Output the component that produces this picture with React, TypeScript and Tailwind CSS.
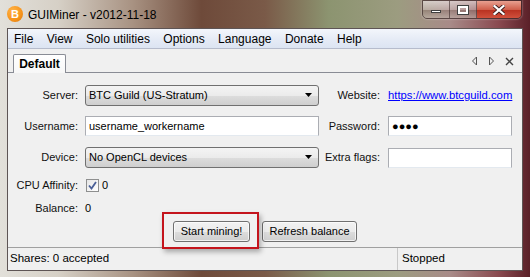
import React from "react";

const menuItems = ["File", "View", "Solo utilities", "Options", "Language", "Donate", "Help"];

function BtcIcon() {
  return (
    <div className="w-[16px] h-[16px] rounded-full bg-[radial-gradient(circle_at_35%_30%,#ffb347,#f7931a_60%,#d8760c)] flex items-center justify-center text-white text-[11px] font-bold leading-none">
      B
    </div>
  );
}

function TitleButtons() {
  return (
    <div className="flex h-[19px] ml-auto mr-[8px] border border-[#3b2a2a]/70 rounded-b-[5px] overflow-hidden shadow-[0_0_2px_rgba(255,255,255,0.6)]">
      <div className="w-[27px] h-full flex items-end justify-center pb-[5px] bg-[linear-gradient(180deg,rgba(255,255,255,0.55),rgba(255,255,255,0.25)_50%,rgba(120,100,90,0.35)_51%,rgba(200,190,180,0.5))] border-r border-[#3b2a2a]/60">
        <div className="w-[10px] h-[3px] bg-white border border-[#404040]" />
      </div>
      <div className="w-[27px] h-full flex items-center justify-center bg-[linear-gradient(180deg,rgba(255,255,255,0.55),rgba(255,255,255,0.25)_50%,rgba(120,100,90,0.35)_51%,rgba(200,190,180,0.5))] border-r border-[#3b2a2a]/60">
        <div className="w-[10px] h-[8px] border-[2px] border-white outline outline-1 outline-[#404040] bg-transparent" />
      </div>
      <div className="w-[44px] h-full flex items-center justify-center bg-[linear-gradient(180deg,#e8a090,#d0604c_50%,#b83020_51%,#d0503c)]">
        <svg width="12" height="10" viewBox="0 0 12 10">
          <path d="M1.5 1 L10.5 9 M10.5 1 L1.5 9" stroke="#3a1a1a" strokeWidth="4" strokeLinecap="square" />
          <path d="M1.5 1 L10.5 9 M10.5 1 L1.5 9" stroke="#ffffff" strokeWidth="2.2" strokeLinecap="square" />
        </svg>
      </div>
    </div>
  );
}

function Combo({ value }: { value: string }) {
  return (
    <div className="w-[234px] h-[21px] rounded-[3px] border border-[#707070] bg-[linear-gradient(180deg,#f4f4f4,#ebebeb_50%,#dddddd_51%,#cfcfcf)] flex items-center pl-[3px] pr-[5px]">
      <span className="flex-1 text-[11px]">{value}</span>
      <svg width="8" height="5" viewBox="0 0 8 5">
        <path d="M0 0 H7 L3.5 4 Z" fill="#000" />
      </svg>
    </div>
  );
}

function TextBox({ value, w }: { value?: string; w: string }) {
  return (
    <div className={`${w} h-[20px] bg-white border border-[#abadb3] border-b-[#e3e9ef] flex items-center px-[3px] text-[11px]`}>
      {value}
    </div>
  );
}

function Label({ children, w = "w-[70px]" }: { children: React.ReactNode; w?: string }) {
  return <div className={`${w} shrink-0 text-right text-[11px] text-[#111]`}>{children}</div>;
}

function Button({ children, w }: { children: React.ReactNode; w: string }) {
  return (
    <div className={`${w} h-[21px] rounded-[3px] border border-[#707070] bg-[linear-gradient(180deg,#f2f2f2,#ebebeb_50%,#dddddd_51%,#cfcfcf)] shadow-[inset_0_0_0_1px_rgba(255,255,255,0.7)] flex items-center justify-center text-[11px]`}>
      {children}
    </div>
  );
}

export default function App() {
  return (
    <div className="w-[530px] h-[277px] flex flex-col overflow-hidden font-['Liberation_Sans',Arial,sans-serif] text-black bg-[linear-gradient(90deg,#e2e0da_0%,#d6d0c6_11%,#a89282_25%,#6e4a3a_38%,#7a5a48_50%,#8c9470_62%,#9c9c80_75%,#a88a88_85%,#8a4a50_94%,#5a2028_100%)]">
      {/* title bar */}
      <div className="h-[28px] shrink-0 flex items-start">
        <div className="ml-[7px] mt-[6px]">
          <BtcIcon />
        </div>
        <div className="ml-[5px] mt-[6px] text-[12px] text-black">GUIMiner - v2012-11-18</div>
        <TitleButtons />
      </div>

      {/* client area */}
      <div className="mx-[7px] h-[243px] shrink-0 border border-[#3a2e2e]/80 bg-[#f0f0f0] flex flex-col">
        <div className="h-[20px] shrink-0 border-b border-[#b6bccc] bg-[linear-gradient(180deg,#f3f6fb,#e4eaf5_60%,#dce4f2)] flex items-center pl-[6px] gap-[13.4px] text-[12px]">
          {menuItems.map((m) => (
            <span key={m}>{m}</span>
          ))}
        </div>

        <div className="h-[24px] shrink-0 border-b border-[#898c95] flex items-end pl-[5px]">
          <div className="w-[53px] h-[19px] -mb-px border border-[#898c95] border-b-0 rounded-t-[2px] bg-[linear-gradient(180deg,#ffffff,#f7f7f7)] flex items-center justify-center text-[12px] font-bold">
            Default
          </div>
          <div className="ml-auto mr-[8px] mb-[6px] flex items-center gap-[10px]">
            <svg width="7" height="10" viewBox="0 0 7 10">
              <path d="M5.5 1 L1.5 5 L5.5 9 Z" fill="none" stroke="#555" strokeWidth="1" />
            </svg>
            <svg width="7" height="10" viewBox="0 0 7 10">
              <path d="M1.5 1 L5.5 5 L1.5 9 Z" fill="none" stroke="#555" strokeWidth="1" />
            </svg>
            <svg width="9" height="9" viewBox="0 0 9 9">
              <path d="M1 1 L8 8 M8 1 L1 8" stroke="#444" strokeWidth="1.4" />
            </svg>
          </div>
        </div>

        {/* panel */}
        <div className="h-[174px] shrink-0 flex flex-col pt-[12px]">
          <div className="h-[21px] flex items-center">
            <Label>Server:</Label>
            <div className="ml-[7px]">
              <Combo value="BTC Guild (US-Stratum)" />
            </div>
            <Label w="w-[61px]">Website:</Label>
            <span className="ml-[8px] text-[11.3px] text-[#0000ff] underline">https://www.btcguild.com</span>
          </div>
          <div className="h-[20px] mt-[10px] flex items-center">
            <Label>Username:</Label>
            <div className="ml-[7px]">
              <TextBox w="w-[234px]" value="username_workername" />
            </div>
            <Label w="w-[61px]">Password:</Label>
            <div className="ml-[8px]">
              <TextBox w="w-[124px]" value={"\u25CF\u25CF\u25CF\u25CF"} />
            </div>
          </div>
          <div className="h-[21px] mt-[11px] flex items-center">
            <Label>Device:</Label>
            <div className="ml-[7px]">
              <Combo value="No OpenCL devices" />
            </div>
            <Label w="w-[61px]">Extra flags:</Label>
            <div className="ml-[8px]">
              <TextBox w="w-[124px]" />
            </div>
          </div>
          <div className="h-[14px] mt-[10px] flex items-center">
            <Label>CPU Affinity:</Label>
            <div className="ml-[8px] w-[13px] h-[13px] border border-[#8e8f8f] bg-[linear-gradient(135deg,#e6e6e6,#ffffff)] flex items-center justify-center">
              <svg width="9" height="9" viewBox="0 0 9 9">
                <path d="M1 4.5 L3.5 7.5 L8 1" fill="none" stroke="#4a5f97" strokeWidth="1.8" />
              </svg>
            </div>
            <span className="ml-[3px] text-[11px]">0</span>
          </div>
          <div className="h-[14px] mt-[9px] flex items-center">
            <Label>Balance:</Label>
            <span className="ml-[7px] text-[11px]">0</span>
          </div>
          <div className="h-[21px] mt-[6px] flex justify-center gap-[12px]">
            <div className="relative">
              <Button w="w-[77px]">Start mining!</Button>
              <div className="absolute -left-[11px] -top-[9px] w-[97px] h-[37px] border-2 border-[#c4141c] shadow-[2px_3px_5px_rgba(0,0,0,0.3)]" />
            </div>
            <Button w="w-[95px]">Refresh balance</Button>
          </div>
        </div>

        {/* status bar */}
        <div className="h-[23px] shrink-0 border-t border-[#a0a0a0] flex items-center text-[11.5px]">
          <div className="w-[390px] h-full flex items-center pl-[2px] border-r border-[#c8c8c8]">Shares: 0 accepted</div>
          <div className="pl-[4px]">Stopped</div>
        </div>
      </div>
    </div>
  );
}
